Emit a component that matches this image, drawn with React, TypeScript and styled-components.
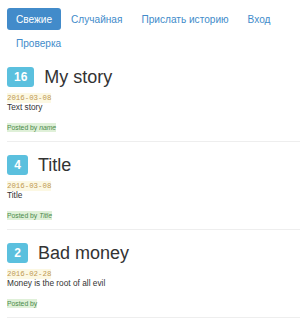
import styled, { createGlobalStyle } from 'styled-components';

const GlobalStyle = createGlobalStyle`
  html, body {
    margin: 0;
    padding: 0;
    background: #fff;
  }
  body {
    font-family: "Liberation Sans", Arial, sans-serif;
    color: #333;
  }
`;

const Page = styled.div`
  padding: 8px 0 0 7px;
`;

const Nav = styled.ul`
  list-style: none;
  margin: 0;
  padding: 0;
  display: flex;
  flex-wrap: wrap;
  gap: 2px 1px;
  width: 286px;
`;

const NavItem = styled.li<{ $active?: boolean }>`
  height: 22px;
  display: flex;
  align-items: center;
  padding: 0 9px;
  border-radius: 3px;
  font-size: 10.1px;
  color: ${p => (p.$active ? '#fff' : '#428bca')};
  background: ${p => (p.$active ? '#428bca' : 'transparent')};
  cursor: pointer;
`;

const Story = styled.article`
  padding-top: 13px;
`;

const Header = styled.div`
  display: flex;
  align-items: center;
  gap: 10px;
  height: 20px;
`;

const Badge = styled.span`
  min-width: 21px;
  height: 20px;
  padding: 0 7px;
  box-sizing: border-box;
  display: flex;
  align-items: center;
  justify-content: center;
  border-radius: 3px;
  background: #5bc0de;
  color: #fff;
  font-weight: 700;
  font-size: 12px;
`;

const Title = styled.h2`
  margin: 0;
  font-size: 18px;
  font-weight: 400;
  color: #333;
  line-height: 20px;
`;

const DateLine = styled.div`
  margin-top: 3px;
  line-height: 10px;
  height: 10px;
`;

const DateText = styled.span`
  font-family: "Liberation Mono", "Courier New", monospace;
  font-size: 7.4px;
  color: #c09853;
  background: #fcf8e3;
  padding: 1px 0;
`;

const Body = styled.p`
  margin: 2px 0 0 0;
  font-size: 8.3px;
  line-height: 11px;
  color: #333;
`;

const PostedLine = styled.div`
  margin-top: 7px;
  line-height: 10px;
  height: 10px;
`;

const Posted = styled.span`
  font-size: 6.8px;
  color: #4a8a4a;
  background: #dff0d8;
  padding: 1px 0;
`;

const Divider = styled.hr`
  margin: 11px 0 0 0;
  border: 0;
  border-top: 1px solid #eee;
`;

const navItems = ['Свежие', 'Случайная', 'Прислать историю', 'Вход', 'Проверка'];

const stories = [
  { votes: 16, title: 'My story', date: '2016-03-08', text: 'Text story', author: 'name' },
  { votes: 4, title: 'Title', date: '2016-03-08', text: 'Title', author: 'Title' },
  { votes: 2, title: 'Bad money', date: '2016-02-28', text: 'Money is the root of all evil', author: '' },
];

export default function App() {
  return (
    <>
      <GlobalStyle />
      <Page>
        <Nav>
          {navItems.map((item, i) => (
            <NavItem key={item} $active={i === 0}>
              {item}
            </NavItem>
          ))}
        </Nav>
        {stories.map(story => (
          <Story key={story.title}>
            <Header>
              <Badge>{story.votes}</Badge>
              <Title>{story.title}</Title>
            </Header>
            <DateLine>
              <DateText>{story.date}</DateText>
            </DateLine>
            <Body>{story.text}</Body>
            <PostedLine>
              <Posted>Posted by {story.author ? <i>{story.author}</i> : null}</Posted>
            </PostedLine>
            <Divider />
          </Story>
        ))}
      </Page>
    </>
  );
}
